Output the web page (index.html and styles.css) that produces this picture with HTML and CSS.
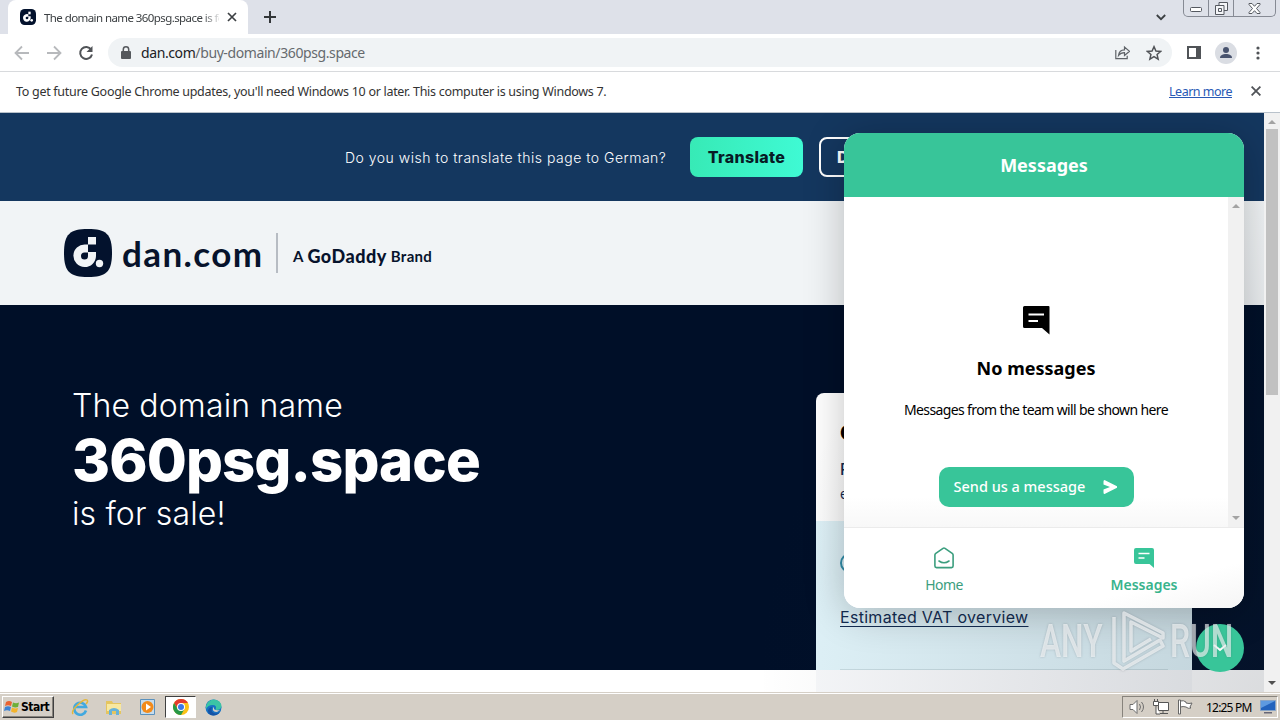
FILE: index.html
```html
<!DOCTYPE html>
<html lang="en">
<head>
<meta charset="UTF-8">
<meta name="viewport" content="width=device-width, initial-scale=1.0">
<title>The domain name 360psg.space is for sale</title>
<link rel="stylesheet" href="styles.css">
</head>
<body>
<div class="screen">
<div class="tab-strip">
<div class="tab">
<svg class="favicon" width="16" height="16" viewBox="0 0 48 48"><rect width="48" height="48" rx="14" fill="#03122d"/><path d="M25 16a11.500 11.500 0 1 0 7 11v-5h-7v5a4 4 0 1 1-4-4h4z" fill="#fff"/><path d="M25 8h7v8h-7z" fill="#fff"/><circle cx="35" cy="34" r="4" fill="#fff"/></svg>
<span class="tab-title">The domain name 360psg.space is fo</span>
<svg width="10" height="10" viewBox="0 0 10 10" fill="none" stroke="#3c4043" stroke-width="1.700"><path d="M1 1l8 8M9 1L1 9"/></svg>
</div>
<svg class="new-tab" width="12" height="12" viewBox="0 0 12 12" stroke="#333639" stroke-width="2"><path d="M6 0v12M0 6h12"/></svg>
<svg class="tab-search" width="10" height="7" viewBox="0 0 10 7" fill="none" stroke="#3c4043" stroke-width="1.800"><path d="M.8 1L5 5.200 9.200 1"/></svg>
<div class="window-buttons">
<span><svg width="13" height="6" viewBox="0 0 13 6"><rect x=".5" y=".5" width="11" height="4" rx="1" fill="#fff" stroke="#555960"/></svg></span>
<span><svg width="13" height="13" viewBox="0 0 13 13" fill="#f4f5f8" stroke="#555960"><path d="M4 .5h8.500v8H4z"/><path d="M.5 3.500h8.500v9H.5zM3.500 6.500h3v3h-3z"/></svg></span>
<span><svg width="13" height="11" viewBox="0 0 13 11"><path d="M1 .5h3l2.500 2.800L9 .5h3v1L8.500 5.500 12 9.500v1H9L6.500 7.700 4 10.500H1v-1l3.500-4L1 1.500z" fill="#fff" stroke="#555960"/></svg></span>
</div>
</div>
<div class="toolbar">
<svg width="16" height="16" viewBox="0 0 16 16" fill="none" stroke="#b7b9bc" stroke-width="1.800"><path d="M15 8H2M8 1.500L1.500 8 8 14.500"/></svg>
<svg width="16" height="16" viewBox="0 0 16 16" fill="none" stroke="#b7b9bc" stroke-width="1.800"><path d="M1 8h13M8 1.500L14.500 8 8 14.500"/></svg>
<svg width="16" height="16" viewBox="0 0 16 16" fill="none" stroke="#505357" stroke-width="2"><path d="M13.200 4.600A6 6 0 1 0 14 9.500"/><path d="M14.500 1v6h-6z" fill="#505357" stroke="none"/></svg>
<div class="address-bar">
<svg width="10" height="13" viewBox="0 0 10 13"><rect x="0" y="5" width="10" height="8" rx="1" fill="#55585c"/><path d="M2.300 5V3.500a2.700 2.700 0 0 1 5.400 0V5" fill="none" stroke="#55585c" stroke-width="1.500"/></svg>
<span class="url"><b>dan.com</b>/buy-domain/360psg.space</span>
<svg class="share" width="15" height="15" viewBox="0 0 15 15" fill="none" stroke="#5f6368" stroke-width="1.200"><path d="M.8 5v8.700h11.400v-3"/><path d="M3.500 10.500c.5-4 2.500-5.700 6-5.700V2l5 4.300-5 4.200V7.700c-2.600 0-4.500.8-6 2.800z"/></svg>
<svg class="star" width="16" height="16" viewBox="0 0 24 24" fill="none" stroke="#505357" stroke-width="2.200"><path d="M12 2.500l2.900 6.500 7 .7-5.300 4.600 1.600 6.900-6.200-3.700-6.200 3.700 1.600-6.900L2.100 9.700l7-.7z"/></svg>
</div>
<svg class="panel-icon" width="14" height="13" viewBox="0 0 14 13"><path d="M1 1h12v11H1z" fill="#fff" stroke="#505357" stroke-width="2"/><path d="M9 0h5v13H9z" fill="#505357"/></svg>
<svg class="avatar" width="22" height="22" viewBox="0 0 22 22"><circle cx="11" cy="11" r="11" fill="#dadde3"/><circle cx="11" cy="8" r="3" fill="#48536e"/><path d="M5 16c0-3 3-4 6-4s6 1 6 4z" fill="#48536e"/></svg>
<svg class="menu-dots" width="4" height="14" viewBox="0 0 4 14" fill="#505357"><circle cx="2" cy="2" r="1.600"/><circle cx="2" cy="7" r="1.600"/><circle cx="2" cy="12" r="1.600"/></svg>
</div>
<div class="infobar">
<span class="info-text">To get future Google Chrome updates, you'll need Windows 10 or later. This computer is using Windows 7.</span>
<a class="learn-more">Learn more</a>
<svg width="10" height="10" viewBox="0 0 10 10" fill="none" stroke="#505357" stroke-width="1.800"><path d="M.6.600l8.800 8.800M9.400.600L.6 9.400"/></svg>
</div>
<div class="viewport">
<div class="page">
<div class="translate-bar">
<span class="translate-text">Do you wish to translate this page to German?</span>
<span class="translate-button">Translate</span>
<span class="dismiss-button">Dismiss</span>
</div>
<header class="header">
<svg width="48" height="48" viewBox="0 0 48 48"><path d="M24 0C42 0 48 5 48 24S42 48 24 48 0 43 0 24 6 0 24 0z" fill="#03122d"/><path d="M24 15.500h-3A11.300 11.300 0 1 0 32 27v-4h-8v4a3.500 3.500 0 1 1-3.500-3.500H24z" fill="#f1f4f6"/><path d="M24 8h8v7.500h-8z" fill="#f1f4f6"/><circle cx="35.500" cy="34.500" r="3.700" fill="#f1f4f6"/></svg>
<span class="logo-text">dan.com</span>
<span class="brand"><span class="brand-a">A</span><b>GoDaddy</b><span class="brand-b">Brand</span></span>
</header>
<section class="hero">
<div class="hero-text">
<div class="hero-line">The domain name</div>
<h1>360psg.space</h1>
<div class="hero-line sale">is for sale!</div>
</div>
<div class="card">
<div class="card-top">
<h2>Get this domain</h2>
<p class="price">Price in USD</p>
<p class="excl">excl. VAT</p>
</div>
<div class="card-vat">
<svg width="20" height="20" viewBox="0 0 20 20"><circle cx="10" cy="10" r="9" fill="none" stroke="#318eaa" stroke-width="2"/></svg>
<a>Estimated VAT overview</a>
<hr>
</div>
<div class="card-bottom"></div>
</div>
</section>
<div class="shade"></div>
<div class="messenger">
<div class="messenger-header">Messages</div>
<div class="messenger-body">
<div class="empty">
<svg width="28" height="29" viewBox="0 0 28 29"><path d="M2.500 0h24q1 0 1 1v27.500L20 22H2.500Q1 22 1 20.500v-19Q1 0 2.500 0z"/><path d="M6.500 8.500h15.500M6.500 15h9.500" stroke="#fff" stroke-width="2"/></svg>
<h3>No messages</h3>
<p>Messages from the team will be shown here</p>
<span class="send-button">Send us a message<svg width="14" height="14" viewBox="0 0 14 14"><path d="M1.500 0L14 6.300v1.400L1.500 14Q.5 14 .5 12.500V9.500L7 7 .5 4.500v-3Q.5 0 1.500 0z" fill="#fff"/></svg></span>
</div>
<div class="scrollbar inner"><i class="up"></i><i class="down"></i></div>
</div>
<div class="messenger-nav">
<span class="nav-home"><svg width="20" height="22" viewBox="0 0 20 22" fill="none" stroke="#3b9e7e" stroke-width="1.600"><path d="M.9 8Q.9 7 1.800 6.300L9 1.300q1-.7 2 0l7.200 5q.9.700.9 1.700v11q0 1.600-1.600 1.600h-15Q.9 20.600.9 19z"/><path d="M5 14q5 3.500 10 0" stroke-linecap="round"/></svg>Home</span>
<span class="nav-messages"><svg width="20" height="22" viewBox="0 0 20 22"><path d="M2 1h16q2 0 2 2v18l-4.500-4H2q-2 0-2-2V3q0-2 2-2z" fill="#38c599"/><path d="M4.500 6.500h11M4.500 11h6" stroke="#fff" stroke-width="1.500"/></svg>Messages</span>
</div>
</div>
<div class="chat-toggle"><svg width="14" height="8" viewBox="0 0 14 8" fill="none" stroke="#fff" stroke-width="2"><path d="M1 1l6 5 6-5"/></svg></div>
</div>
<div class="scrollbar"><i class="up"></i><i class="thumb"></i><i class="down"></i></div>
<div class="watermark">
<span>ANY</span>
<svg width="56" height="64" viewBox="0 0 56 64" fill="none" stroke="#fff" stroke-opacity=".62" stroke-width="3.500" stroke-linejoin="round"><path d="M14 48V4l39 20v5L21 13v29l20-12M4 8v46l9 6 40-23-3-6-36 21V17"/></svg>
<span>RUN</span>
</div>
</div>
<div class="taskbar">
<div class="start-button">
<svg width="16" height="16" viewBox="0 0 16 16"><path d="M2 3q3-2 6 0L7 7Q4 5.500 1 7z" fill="#e96332"/><path d="M9 3.500q3 1.500 6 0L14 8q-3 1-6-.5z" fill="#6daf38"/><path d="M1 8q3-1.500 6 0l-1 4q-3-1.500-6 0z" fill="#3d83d5"/><path d="M8 8.500q3 1.500 6 .5l-1 4q-3 1.500-6-.5z" fill="#f3b42c"/></svg>
Start
</div>
<div class="quick-launch">
<svg width="18" height="18" viewBox="0 0 18 18" fill="none"><path d="M15 12.500A6 6 0 1 1 15 9H4" stroke="#42a9df" stroke-width="2.600"/><path d="M2 16C-1 12 13 0 16 2q1.500 1.500-1 4" stroke="#e4b73a" stroke-width="1.500"/></svg>
<svg width="18" height="18" viewBox="0 0 18 18"><path d="M1 3h6l1 2h8v11H1z" fill="#e5c55f"/><path d="M2 6h14v7H2z" fill="#f8e8a0"/><path d="M4 17v-5q5-4 10 0v5h-3v-4H7v4z" fill="#67b2d9"/></svg>
<svg width="18" height="18" viewBox="0 0 18 18"><path d="M1.500 1.500h14v15h-14z" fill="#c6dced" stroke="#5a91bd"/><circle cx="8.500" cy="9" r="6" fill="#f28b1c"/><path d="M7 5.500l5 3.500-5 3.500z" fill="#fff"/></svg>
<span class="chrome-task"><svg width="16" height="16" viewBox="0 0 16 16"><circle cx="8" cy="8" r="8" fill="#fbc116"/><path d="M1.070 4A8 8 0 0 1 14.930 4H8L5 10z" fill="#e33b2e"/><path d="M1.070 4A8 8 0 0 0 8 16l3.500-6-6.500.500z" fill="#279847"/><circle cx="8" cy="8" r="4" fill="#fff"/><circle cx="8" cy="8" r="3" fill="#3b78e7"/></svg></span>
<svg width="17" height="17" viewBox="0 0 17 17"><circle cx="8.500" cy="8.500" r="8" fill="#1772c4"/><path d="M1 7Q3 .5 9 .5q7 .5 7.500 7-1 4-6 3.500 2-5-3-5Q3 6 1 10z" fill="#3bc4a5"/><path d="M7 8q-2 5 3 6.500 3 .5 5-2-2 4-7 4-5-.5-5-5Q4 8 7 8z" fill="#1553a5"/><path d="M9 8q-1 4 6 3l-3 2q-5 0-4-4z" fill="#d5cec5"/></svg>
</div>
<div class="tray">
<svg width="17" height="16" viewBox="0 0 17 16" fill="#fff" stroke="#6d6d6d"><path d="M1 5.500h3l4-4v13l-4-4H1z"/><path d="M10.500 5q2 3 0 6M12.500 3q4 5 0 10" fill="none"/></svg>
<svg width="17" height="16" viewBox="0 0 17 16" fill="#fff" stroke="#555"><path d="M5.500 3.500h10v8h-10zM7 14.500h8M10 12v2"/><path d="M.5 2.500h5v4h-5zM1.500 0v2M4.500 0v2M3 7v8h4" /></svg>
<svg width="17" height="16" viewBox="0 0 17 16" fill="#fff" stroke="#666"><path d="M1.500 1v14h2V1zM3.500 2q3-1 5.500 1v1q3 1 6 0l-2 4 1 1q-3 1-5-1-3-1-5.500 0z"/></svg>
<span class="clock">12:25 PM</span>
<svg width="16" height="14" viewBox="0 0 16 14"><path d="M.5.500h15v10H.5z" fill="#2363bd" stroke="#88a4c6"/><path d="M1 1h14L1 8z" fill="#5e9ae0"/><path d="M4 12h8v1.500H4z" fill="#667"/></svg>
</div>
</div>
</div>
</body>
</html>
```
FILE: styles.css
```css
* {
box-sizing: border-box;
}
body {
margin: 0;
font-family: "Noto Sans", "DejaVu Sans", sans-serif;
color: #000;
}
svg {
display: block;
flex: none;
}
h1, h2, h3, p {
margin: 0;
}
.screen {
width: 1280px;
height: 720px;
overflow: hidden;
display: flex;
flex-direction: column;
background: #fff;
}
.tab-strip {
height: 34px;
flex: none;
background: #dee1e9;
display: flex;
padding-left: 8px;
}
.tab {
width: 240px;
height: 34px;
background: #fff;
border-radius: 8px 8px 0 0;
display: flex;
align-items: center;
padding: 0 11px 0 12px;
}
.tab-title {
width: 175px;
margin: 0 8px;
font-size: 11.5px;
letter-spacing: -0.58px;
color: #3c4043;
white-space: nowrap;
-webkit-mask-image: linear-gradient(90deg, #000 158px, transparent 178px);
mask-image: linear-gradient(90deg, #000 158px, transparent 178px);
}
.new-tab {
margin: 11px 0 0 16px;
}
.tab-search {
margin: 14px 17px 0 auto;
}
.window-buttons {
width: 93px;
height: 17px;
margin-right: 4px;
border: 1px solid #868a94;
border-top: 0;
border-radius: 0 0 5px 5px;
display: flex;
}
.window-buttons span {
width: 25px;
display: flex;
justify-content: center;
align-items: center;
border-right: 1px solid #868a94;
}
.window-buttons span:first-child {
padding-top: 4px;
}
.window-buttons span:last-child {
flex: 1;
border: 0;
}
.toolbar {
height: 38px;
flex: none;
display: flex;
align-items: center;
gap: 16px;
padding: 0 20px 0 14px;
border-bottom: 1px solid #d8dadd;
}
.address-bar {
width: 1064px;
height: 29px;
margin-left: -2px;
border-radius: 15px;
background: #f0f3f5;
display: flex;
align-items: center;
padding: 0 10px 0 13px;
}
.url {
margin-left: 10px;
font-size: 14px;
letter-spacing: -0.4px;
color: #666a6e;
}
.url b {
font-weight: 400;
color: #202124;
}
.share {
margin-left: auto;
}
.star {
margin-left: 16px;
}
.panel-icon {
margin-left: -1px;
}
.avatar {
margin: 0 2px 0 -2px;
}
.menu-dots {
margin-left: 1px;
}
.infobar {
height: 41px;
flex: none;
display: flex;
align-items: center;
padding: 0 19px 2px 16px;
border-bottom: 1px solid #b9c2cb;
font-size: 12.5px;
color: #333;
}
.info-text {
letter-spacing: -0.29px;
}
.learn-more {
margin: 0 19px 0 auto;
letter-spacing: -0.5px;
color: #2859b5;
text-decoration: underline;
}
.viewport {
position: relative;
height: 579px;
flex: none;
display: flex;
}
.page {
position: relative;
width: 1264px;
overflow: hidden;
}
.translate-bar {
height: 88px;
background: #14375f;
display: flex;
align-items: center;
padding-left: 345px;
color: #fff;
}
.translate-text {
width: 345px;
font: 300 14px Inter, sans-serif;
letter-spacing: 0.5px;
white-space: nowrap;
}
.translate-button, .dismiss-button {
height: 40px;
border-radius: 8px;
font: 800 16px/41px Inter, sans-serif;
letter-spacing: 0.3px;
}
.translate-button {
width: 113px;
background: linear-gradient(90deg, #37eab6, #3ffad4);
color: #071b25;
text-align: center;
}
.dismiss-button {
margin-left: 16px;
width: 106px;
border: 2px solid #fff;
padding-left: 16px;
line-height: 37px;
}
.header {
height: 104px;
background: #f1f4f6;
display: flex;
align-items: center;
padding-left: 64px;
color: #07132c;
}
.logo-text {
width: 155px;
padding-left: 10px;
font: 700 35px/48px Lato, sans-serif;
letter-spacing: 1.4px;
}
.brand {
height: 40px;
margin-left: 9px;
padding: 5px 0 0 15px;
border-left: 2px solid #b7bcc3;
display: flex;
align-items: center;
font: 700 15px Lato, sans-serif;
}
.brand-b {
letter-spacing: 0.3px;
}
.brand b {
margin: 0 4px;
font-weight: 900;
font-size: 18px;
letter-spacing: 0.5px;
}
.hero {
height: 365px;
background: #000f28;
display: flex;
color: #fff;
}
.hero-text {
width: 744px;
margin-left: 72px;
padding-top: 80px;
}
.hero-line {
font: 300 32px/42px Inter, sans-serif;
letter-spacing: 0.15px;
}
.hero h1 {
font: 800 58px/66px Inter, sans-serif;
letter-spacing: -0.9px;
}
.card {
width: 376px;
height: 420px;
margin-top: 88px;
border-radius: 8px;
background: #fff;
overflow: hidden;
color: #132c53;
}
.card-top {
height: 128px;
padding: 28px 24px 0;
}
.card-top h2 {
font: 800 20px/24px Inter, sans-serif;
color: #000;
}
.price {
margin-top: 14px;
font: 500 16px/20px Inter, sans-serif;
}
.excl {
margin-top: 6px;
font: 14px/18px Inter, sans-serif;
}
.card-vat {
height: 149px;
padding: 32px 24px 0;
background: #e0f3f9;
}
.card-vat a {
display: block;
margin-top: 32px;
font: 16px/24px Inter, sans-serif;
letter-spacing: 0.3px;
text-decoration: underline;
text-underline-offset: 3px;
}
.card-vat hr {
margin: 40px 0 0;
border: 0;
border-top: 1px solid #c7dbe1;
}
.card-bottom {
height: 140px;
background: #f7f8fa;
}
.shade {
position: absolute;
right: 0;
bottom: 0;
width: 500px;
height: 500px;
background: radial-gradient(ellipse at bottom right, rgba(29, 39, 54, 0.16) 0, rgba(29, 39, 54, 0) 72%);
}
.messenger {
position: absolute;
left: 844px;
top: 20px;
width: 400px;
height: 475px;
border-radius: 16px;
overflow: hidden;
background: #fff;
box-shadow: 0 5px 40px rgba(0, 0, 0, 0.24);
}
.messenger-header {
height: 64px;
background: #38c599;
color: #fff;
text-align: center;
font: 700 18px/64px "Noto Sans", sans-serif;
}
.messenger-body {
height: 331px;
display: flex;
border-bottom: 1px solid #ebebeb;
}
.empty {
flex: 1;
display: flex;
flex-direction: column;
align-items: center;
padding-top: 109px;
background: linear-gradient(#fff 300px, #f8f8f8);
}
.empty h3 {
margin-top: 20px;
font-size: 18px;
line-height: 26px;
}
.empty p {
margin-top: 19px;
font-size: 14px;
line-height: 20px;
letter-spacing: -0.62px;
}
.send-button {
width: 195px;
height: 40px;
margin-top: 47px;
border-radius: 10px;
background: #38c599;
color: #fff;
display: flex;
align-items: center;
justify-content: space-between;
padding: 0 17px 2px 15px;
font-size: 14.5px;
font-weight: 500;
}
.send-button svg {
margin-top: 2px;
}
.messenger-nav {
height: 80px;
display: flex;
background: linear-gradient(165deg, #fff 75%, #f5f5f5);
}
.messenger-nav span {
width: 200px;
display: flex;
flex-direction: column;
align-items: center;
gap: 6px;
padding-top: 19px;
font-size: 14px;
line-height: 20px;
}
.nav-home {
color: #3b9e7e;
letter-spacing: -0.6px;
}
.nav-messages {
color: #38b38c;
font-weight: 600;
}
.chat-toggle {
position: absolute;
left: 1196px;
top: 511px;
width: 48px;
height: 48px;
border-radius: 50%;
background: #38c599;
display: flex;
align-items: center;
justify-content: center;
}
.scrollbar {
width: 16px;
background: #f1f1f1;
display: flex;
flex-direction: column;
align-items: center;
padding: 7px 0;
}
.scrollbar i {
border: 4px solid transparent;
}
.scrollbar .up {
border-top: 0;
border-bottom-color: #a3a3a3;
}
.scrollbar .down {
margin-top: auto;
border-bottom: 0;
border-top-color: #505050;
}
.scrollbar .thumb {
width: 12px;
height: 266px;
margin-top: 5px;
border: 0;
background: #c1c1c1;
}
.inner .down {
border-top-color: #a3a3a3;
}
.watermark {
position: absolute;
left: 1040px;
top: 496px;
height: 64px;
display: flex;
align-items: center;
color: rgba(255, 255, 255, 0.6);
font: 500 46px/64px Roboto, sans-serif;
filter: drop-shadow(0 0 1px rgba(80, 90, 100, 0.5));
}
.watermark span {
width: 91px;
white-space: nowrap;
transform: scaleX(0.69);
transform-origin: 0 50%;
}
.watermark span:first-child {
width: 70px;
}
.watermark span:last-child {
margin-left: 4px;
}
.taskbar {
height: 28px;
flex: none;
display: flex;
background: #d5cfc6;
border-top: 1px solid #d5cfc6;
box-shadow: inset 0 1px #fff;
padding: 3px 2px 2px;
}
.start-button {
width: 52px;
height: 22px;
display: flex;
align-items: center;
gap: 1px;
padding-left: 1px;
border: 1px solid;
border-color: #fff #404040 #404040 #fff;
box-shadow: inset -1px -1px #87837c;
font: 700 12px "DejaVu Sans Condensed", sans-serif;
letter-spacing: -0.5px;
}
.quick-launch {
display: flex;
align-items: center;
gap: 16px;
margin-left: 17px;
}
.chrome-task {
width: 31px;
height: 22px;
margin: 0 -7px 0 -8px;
display: flex;
align-items: center;
justify-content: center;
background: #fff;
border: 1px solid;
border-color: #404040 #fff #fff #404040;
}
.tray {
width: 156px;
height: 22px;
margin-left: auto;
border: 1px solid;
border-color: #87837c #fff #fff #87837c;
display: flex;
align-items: center;
gap: 7px;
padding-left: 6px;
}
.clock {
margin: 0 0 0 5px;
width: 47px;
font: 12px "Noto Sans", sans-serif;
letter-spacing: -0.8px;
white-space: nowrap;
}
```
